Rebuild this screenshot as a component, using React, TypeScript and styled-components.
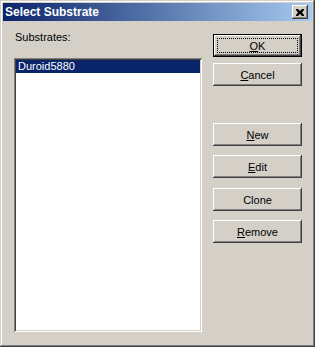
import React from "react";
import styled, { createGlobalStyle } from "styled-components";

const Global = createGlobalStyle`
  html, body {
    margin: 0;
    padding: 0;
    background: #d4d0c8;
  }
  * {
    box-sizing: border-box;
  }
`;

const Ventana = styled.div`
  width: 315px;
  height: 347px;
  display: flex;
  flex-direction: column;
  padding: 3px;
  background: #d4d0c8;
  font-family: "Liberation Sans", Arial, sans-serif;
  font-size: 11px;
  color: #000;
  box-shadow: inset -1px -1px #404040, inset 1px 1px #d4d0c8,
    inset -2px -2px #808080, inset 2px 2px #ffffff;
`;

const BarraTitulo = styled.div`
  height: 18px;
  display: flex;
  align-items: center;
  justify-content: space-between;
  padding: 0 4px 0 2px;
  background: linear-gradient(to right, #0a246a, #a6caf0);
  color: #fff;
  font-weight: bold;
  font-size: 12px;
`;

const BotonCerrar = styled.div`
  width: 16px;
  height: 14px;
  display: flex;
  align-items: center;
  justify-content: center;
  background: #d4d0c8;
  box-shadow: inset -1px -1px #404040, inset 1px 1px #ffffff,
    inset -2px -2px #808080, inset 2px 2px #d4d0c8;
`;

const Cuerpo = styled.div`
  flex: 1;
  display: flex;
  gap: 11px;
  padding: 10px 10px 12px 11px;
`;

const ColumnaIzq = styled.div`
  width: 188px;
  display: flex;
  flex-direction: column;
`;

const Etiqueta = styled.div`
  height: 13px;
  line-height: 13px;
  padding-left: 1px;
`;

const Lista = styled.div`
  margin-top: 14px;
  flex: 1;
  background: #fff;
  padding: 2px;
  box-shadow: inset 1px 1px #808080, inset -1px -1px #ffffff,
    inset 2px 2px #404040, inset -2px -2px #d4d0c8;
`;

const Fila = styled.div<{ $sel?: boolean }>`
  height: 13px;
  line-height: 13px;
  padding-left: 2px;
  background: ${(p) => (p.$sel ? "#0a246a" : "transparent")};
  color: ${(p) => (p.$sel ? "#fff" : "#000")};
`;

const ColumnaDer = styled.div`
  width: 89px;
  display: flex;
  flex-direction: column;
`;

const Boton = styled.div<{ $top: number; $def?: boolean }>`
  position: relative;
  margin-top: ${(p) => p.$top}px;
  height: 23px;
  display: flex;
  align-items: center;
  justify-content: center;
  background: #d4d0c8;
  box-shadow: ${(p) =>
    p.$def
      ? "inset 0 0 0 1px #000, inset -2px -2px #404040, inset 2px 2px #ffffff, inset -3px -3px #808080"
      : "inset -1px -1px #404040, inset 1px 1px #ffffff, inset -2px -2px #808080, inset 2px 2px #d4d0c8"};
  ${(p) =>
    p.$def &&
    `
    &::after {
      content: "";
      position: absolute;
      left: 4px;
      top: 4px;
      right: 4px;
      bottom: 4px;
      border: 1px dotted #000;
    }
  `}
`;

const Tecla = styled.span`
  text-decoration: underline;
`;

const botones = [
  { pre: "", key: "O", post: "K", top: 3, def: true },
  { pre: "", key: "C", post: "ancel", top: 6 },
  { pre: "", key: "N", post: "ew", top: 37 },
  { pre: "", key: "E", post: "dit", top: 9 },
  { pre: "Cl", key: "", post: "one", top: 10 },
  { pre: "", key: "R", post: "emove", top: 9 },
];

export default function App() {
  return (
    <>
      <Global />
      <Ventana>
        <BarraTitulo>
          <span>Select Substrate</span>
          <BotonCerrar>
            <svg width="8" height="7" viewBox="0 0 8 7">
              <path
                d="M0 0h2l2 2 2-2h2v1L6 3.5 8 6v1H6L4 5 2 7H0V6l2-2.5L0 1z"
                fill="#000"
              />
            </svg>
          </BotonCerrar>
        </BarraTitulo>
        <Cuerpo>
          <ColumnaIzq>
            <Etiqueta>Substrates:</Etiqueta>
            <Lista>
              <Fila $sel>Duroid5880</Fila>
            </Lista>
          </ColumnaIzq>
          <ColumnaDer>
            {botones.map((b, i) => (
              <Boton key={i} $top={b.top} $def={b.def}>
                {b.pre}
                {b.key && <Tecla>{b.key}</Tecla>}
                {b.post}
              </Boton>
            ))}
          </ColumnaDer>
        </Cuerpo>
      </Ventana>
    </>
  );
}
